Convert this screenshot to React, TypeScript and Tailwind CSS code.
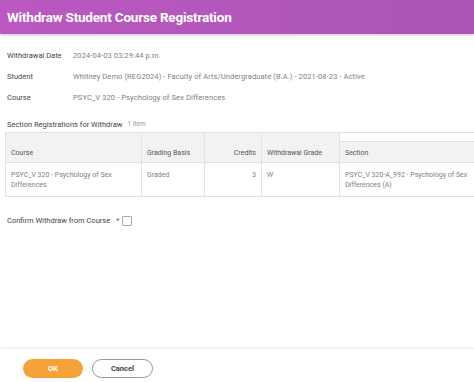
const fields = [
  { label: "Withdrawal Date", value: "2024-04-03 03:29:44 p.m." },
  { label: "Student", value: "Whitney Demo (REG2024) - Faculty of Arts/Undergraduate (B.A.) - 2021-08-23 - Active" },
  { label: "Course", value: "PSYC_V 320 - Psychology of Sex Differences" },
];

export default function App() {
  return (
    <div className="w-[474px] h-[382px] bg-white flex flex-col overflow-hidden font-[Roboto,sans-serif]">
      <div className="h-[34px] shrink-0 bg-gradient-to-r from-[#bb58c2] to-[#ab55b4] shadow-[0_1px_3px_rgba(0,0,0,0.25)] flex items-center px-[7px]">
        <h1 className="text-white font-bold text-[13.5px] tracking-[-0.2px]">Withdraw Student Course Registration</h1>
      </div>

      <div className="flex flex-col gap-[11px] pt-[17px] px-[7px] text-[7.5px]">
        {fields.map((f) => (
          <div key={f.label} className="flex h-[10px] items-center">
            <span className="w-[66px] shrink-0 text-[#444]">{f.label}</span>
            <span className="text-[#808080] whitespace-nowrap tracking-[0.1px]">{f.value}</span>
          </div>
        ))}
      </div>

      <div className="pt-[17px] pl-[5px] text-[7px]">
        <div className="flex items-center gap-[5px] pl-[2px] h-[10px]">
          <span className="text-[#444] text-[7.5px]">Section Registrations for Withdraw</span>
          <span className="text-[#999] text-[6.5px]">1 item</span>
        </div>
        <div className="mt-[2px] w-[480px] flex border-t border-b border-l border-[#e2e2e2] text-[#808080]">
          <div className="w-[136px] shrink-0 border-r border-[#e2e2e2] flex flex-col">
            <div className="h-[30px] bg-[#f2f2f2] border-b border-[#e2e2e2] flex items-end px-[5px] pb-[4px] text-[#555]">Course</div>
            <div className="h-[33px] px-[5px] pt-[7px] leading-[10px]">PSYC_V 320 - Psychology of Sex<br />Differences</div>
          </div>
          <div className="w-[63px] shrink-0 border-r border-[#e2e2e2] flex flex-col">
            <div className="h-[30px] bg-[#f2f2f2] border-b border-[#e2e2e2] flex items-end px-[5px] pb-[4px] text-[#555]">Grading Basis</div>
            <div className="h-[33px] px-[5px] pt-[7px] leading-[10px]">Graded</div>
          </div>
          <div className="w-[57px] shrink-0 border-r border-[#e2e2e2] flex flex-col">
            <div className="h-[30px] bg-[#f2f2f2] border-b border-[#e2e2e2] flex items-end justify-end px-[5px] pb-[4px] text-[#555]">Credits</div>
            <div className="h-[33px] px-[5px] pt-[7px] leading-[10px] text-right">3</div>
          </div>
          <div className="w-[78px] shrink-0 border-r border-[#e2e2e2] flex flex-col">
            <div className="h-[30px] bg-[#f2f2f2] border-b border-[#e2e2e2] flex items-end px-[5px] pb-[4px] text-[#555]">Withdrawal Grade</div>
            <div className="h-[33px] px-[5px] pt-[7px] leading-[10px]">W</div>
          </div>
          <div className="flex-1 flex flex-col">
            <div className="h-[30px] flex flex-col">
              <div className="h-[9px] bg-white border-b border-[#e2e2e2]" />
              <div className="flex-1 bg-[#f2f2f2] border-b border-[#e2e2e2] flex items-end px-[5px] pb-[4px] text-[#555]">Section</div>
            </div>
            <div className="h-[33px] px-[5px] pt-[7px] leading-[10px]">PSYC_V 320-A_992 - Psychology of Sex<br />Differences (A)</div>
          </div>
        </div>
      </div>

      <div className="flex items-center pt-[19px] px-[7px] h-[10px] box-content text-[7.5px]">
        <span className="text-[#444]">Confirm Withdraw from Course</span>
        <span className="text-[#d0304a] ml-[6px]">*</span>
        <span className="ml-[3px] w-[10px] h-[10px] border border-[#aaa] rounded-[1px] bg-white" />
      </div>

      <div className="mt-auto h-[34px] shrink-0 border-t border-[#f0f0f0] shadow-[0_-1px_2px_rgba(0,0,0,0.03)] flex items-center gap-[9px] pl-[23px] pt-[6px] text-[7.5px] font-bold">
        <button className="w-[60px] h-[19px] rounded-full bg-[#f6a23b] text-white">OK</button>
        <button className="w-[61px] h-[19px] rounded-full border border-[#999] bg-white text-[#444]">Cancel</button>
      </div>
    </div>
  );
}
